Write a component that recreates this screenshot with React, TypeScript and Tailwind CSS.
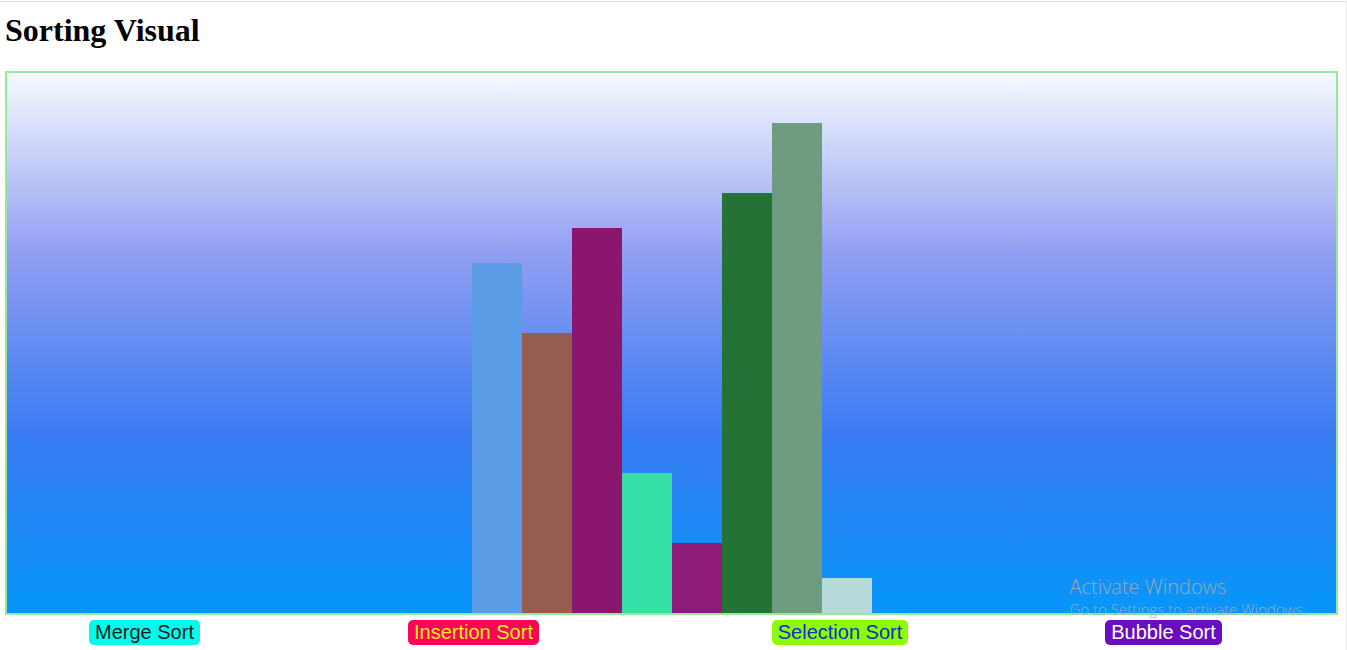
const bars = [
  { value: 10, color: 'bg-[#5a9ce6]' },
  { value: 8, color: 'bg-[#955c4f]' },
  { value: 11, color: 'bg-[#8a166e]' },
  { value: 4, color: 'bg-[#34e0a8]' },
  { value: 2, color: 'bg-[#8c1c78]' },
  { value: 12, color: 'bg-[#247236]' },
  { value: 14, color: 'bg-[#6f9c80]' },
  { value: 1, color: 'bg-[#b6dada]' },
];

const sorts = [
  { label: 'Merge Sort', style: 'bg-[#00fbea] text-[#101c1c]' },
  { label: 'Insertion Sort', style: 'bg-[#fb0556] text-[#ffee20]' },
  { label: 'Selection Sort', style: 'bg-[#8cfb04] text-[#1030c8]' },
  { label: 'Bubble Sort', style: 'bg-[#6a0cc0] text-white' },
];

const UNIT = 35;

export default function App() {
  return (
    <div className="relative mt-px min-h-[calc(100vh-1px)] border-t border-r border-t-[#d8dcdc] border-r-[#ececec] bg-white pl-[5px] pr-2">
      <h1 className="pt-[10px] font-['Liberation_Serif',serif] text-[32px] font-bold leading-9 text-black">
        Sorting Visual
      </h1>
      <main className="mt-[23px]">
        <div className="flex h-[544px] items-end justify-center border-2 border-[#98e89c] bg-[linear-gradient(to_bottom,#f5fafe,#929ff2_33%,#397bf2_67%,#0696fb)]">
          {bars.map((bar, i) => (
            <div key={i} className={`w-[50px] ${bar.color}`} style={{ height: bar.value * UNIT }} />
          ))}
        </div>
        <div className="mt-[5px] grid grid-cols-[279fr_379fr_354fr_293fr] justify-items-center pr-7">
          {sorts.map((sort) => (
            <button
              key={sort.label}
              type="button"
              className={`whitespace-nowrap rounded-[5px] px-[6px] py-px font-['Liberation_Sans',sans-serif] text-[20px] leading-[23px] ${sort.style}`}
            >
              {sort.label}
            </button>
          ))}
        </div>
      </main>
      <div className="pointer-events-none absolute right-10 bottom-[31px] whitespace-nowrap font-['Open_Sans','Noto_Sans',sans-serif] font-light text-[#9caab4]">
        <p className="text-[20px] leading-6">Activate Windows</p>
        <p className="text-[15px] leading-5">Go to Settings to activate Windows.</p>
      </div>
    </div>
  );
}
